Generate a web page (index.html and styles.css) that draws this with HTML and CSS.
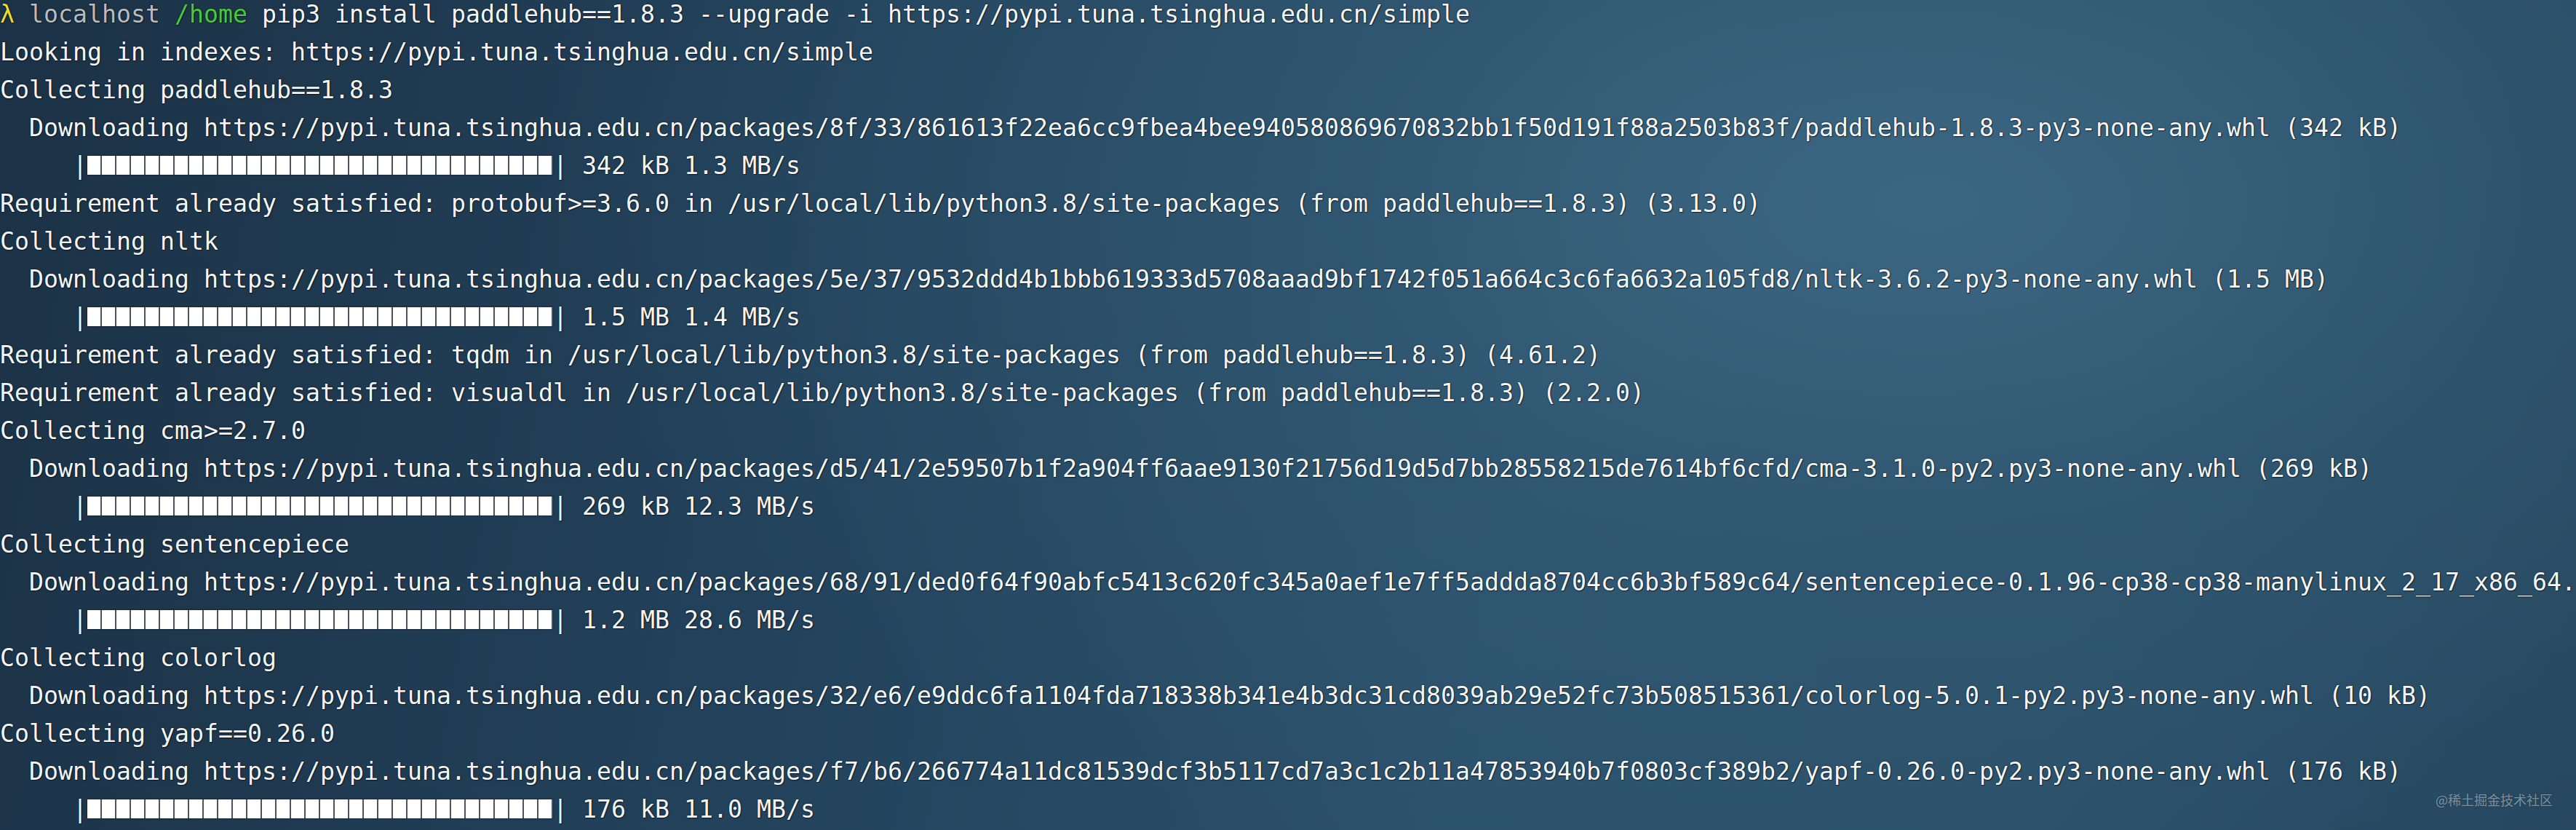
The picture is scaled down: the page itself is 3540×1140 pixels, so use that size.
FILE: index.html
```html
<!DOCTYPE html>
<html lang="en">
<head>
<meta charset="utf-8">
<title>pip3 install paddlehub</title>
<link rel="stylesheet" href="styles.css">
</head>
<body>
<main class="term">
<div class="line"><span class="lambda">λ</span> <span class="host">localhost</span> <span class="cwd">/home</span> pip3 install paddlehub==1.8.3 --upgrade -i https://pypi.tuna.tsinghua.edu.cn/simple</div>
<div class="line">Looking in indexes: https://pypi.tuna.tsinghua.edu.cn/simple</div>
<div class="line">Collecting paddlehub==1.8.3</div>
<div class="line">  Downloading https://pypi.tuna.tsinghua.edu.cn/packages/8f/33/861613f22ea6cc9fbea4bee940580869670832bb1f50d191f88a2503b83f/paddlehub-1.8.3-py3-none-any.whl (342 kB)</div>
<div class="line">     |<span class="bar"></span>| 342 kB 1.3 MB/s</div>
<div class="line">Requirement already satisfied: protobuf&gt;=3.6.0 in /usr/local/lib/python3.8/site-packages (from paddlehub==1.8.3) (3.13.0)</div>
<div class="line">Collecting nltk</div>
<div class="line">  Downloading https://pypi.tuna.tsinghua.edu.cn/packages/5e/37/9532ddd4b1bbb619333d5708aaad9bf1742f051a664c3c6fa6632a105fd8/nltk-3.6.2-py3-none-any.whl (1.5 MB)</div>
<div class="line">     |<span class="bar"></span>| 1.5 MB 1.4 MB/s</div>
<div class="line">Requirement already satisfied: tqdm in /usr/local/lib/python3.8/site-packages (from paddlehub==1.8.3) (4.61.2)</div>
<div class="line">Requirement already satisfied: visualdl in /usr/local/lib/python3.8/site-packages (from paddlehub==1.8.3) (2.2.0)</div>
<div class="line">Collecting cma&gt;=2.7.0</div>
<div class="line">  Downloading https://pypi.tuna.tsinghua.edu.cn/packages/d5/41/2e59507b1f2a904ff6aae9130f21756d19d5d7bb28558215de7614bf6cfd/cma-3.1.0-py2.py3-none-any.whl (269 kB)</div>
<div class="line">     |<span class="bar"></span>| 269 kB 12.3 MB/s</div>
<div class="line">Collecting sentencepiece</div>
<div class="line">  Downloading https://pypi.tuna.tsinghua.edu.cn/packages/68/91/ded0f64f90abfc5413c620fc345a0aef1e7ff5addda8704cc6b3bf589c64/sentencepiece-0.1.96-cp38-cp38-manylinux_2_17_x86_64.</div>
<div class="line">     |<span class="bar"></span>| 1.2 MB 28.6 MB/s</div>
<div class="line">Collecting colorlog</div>
<div class="line">  Downloading https://pypi.tuna.tsinghua.edu.cn/packages/32/e6/e9ddc6fa1104fda718338b341e4b3dc31cd8039ab29e52fc73b508515361/colorlog-5.0.1-py2.py3-none-any.whl (10 kB)</div>
<div class="line">Collecting yapf==0.26.0</div>
<div class="line">  Downloading https://pypi.tuna.tsinghua.edu.cn/packages/f7/b6/266774a11dc81539dcf3b5117cd7a3c1c2b11a47853940b7f0803cf389b2/yapf-0.26.0-py2.py3-none-any.whl (176 kB)</div>
<div class="line">     |<span class="bar"></span>| 176 kB 11.0 MB/s</div>
</main>
<div class="watermark">@稀土掘金技术社区</div>
</body>
</html>
```
FILE: styles.css
```css
html, body {
  margin: 0;
  padding: 0;
}
body {
  width: 3540px;
  height: 1140px;
  overflow: hidden;
  position: relative;
  background:
    radial-gradient(ellipse 1900px 1000px at 2650px 280px, rgba(66, 112, 140, 0.7) 0%, rgba(54, 95, 121, 0.45) 45%, rgba(40, 72, 96, 0) 100%),
    linear-gradient(100deg, #1c3246 0%, #22415a 30%, #2c526d 60%, #2b506a 80%, #25465e 100%);
}
.term {
  margin-top: -6px;
  font-family: "DejaVu Sans Mono", "Liberation Mono", monospace;
  font-size: 33.22px;
  line-height: 52px;
  color: #f5f5f5;
  text-shadow: 0 0 2px rgba(5, 15, 25, 0.85), 1px 1px 1px rgba(5, 15, 25, 0.6);
}
.line {
  white-space: pre;
  height: 52px;
}
.lambda {
  color: #ecdc2c;
}
.host {
  color: #b9bcbf;
}
.cwd {
  color: #49c93a;
}
.bar {
  display: inline-block;
  width: 640px;
  height: 26px;
  vertical-align: -1px;
  background: repeating-linear-gradient(to right, #ffffff 0, #ffffff 18px, #4a5560 18px, #4a5560 20px);
  box-shadow: 0 0 2px rgba(5, 15, 25, 0.8);
}
.watermark {
  position: absolute;
  left: 3347px;
  top: 1086px;
  font-family: "Noto Sans CJK SC", "Noto Sans", sans-serif;
  font-size: 18px;
  line-height: 24px;
  color: rgba(220, 228, 235, 0.5);
  text-shadow: 0 0 2px rgba(0, 0, 0, 0.3);
  white-space: nowrap;
}
```
